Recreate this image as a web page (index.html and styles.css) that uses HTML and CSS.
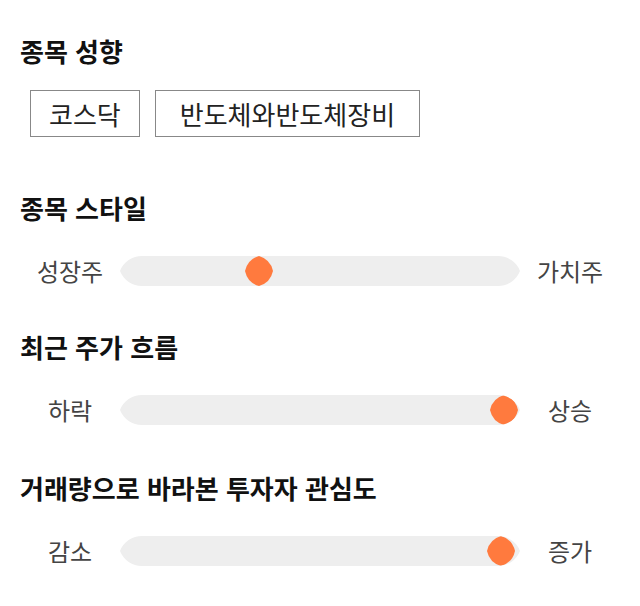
FILE: index.html
```html
<!DOCTYPE html>
<html lang="ko">
<head>
<meta charset="utf-8">
<title>종목 성향</title>
<link rel="stylesheet" href="styles.css">
</head>
<body>
<main class="page">
  <section class="section section-tendency">
    <h2 class="section-title">종목 성향</h2>
    <div class="tags">
      <span class="tag tag-short">코스닥</span>
      <span class="tag tag-long">반도체와반도체장비</span>
    </div>
  </section>

  <section class="section section-slider">
    <h2 class="section-title">종목 스타일</h2>
    <div class="slider-row">
      <span class="slider-label">성장주</span>
      <div class="track">
        <svg class="thumb" style="left: calc((100% - 28px) * 0.336)" viewBox="0 0 28 30" width="28" height="30"><path d="M14 0 A20 20 0 0 1 28 15 A20 20 0 0 1 14 30 A20 20 0 0 1 0 15 A20 20 0 0 1 14 0 Z"/></svg>
      </div>
      <span class="slider-label">가치주</span>
    </div>
  </section>

  <section class="section section-slider">
    <h2 class="section-title">최근 주가 흐름</h2>
    <div class="slider-row">
      <span class="slider-label">하락</span>
      <div class="track">
        <svg class="thumb" style="left: calc((100% - 28px) * 0.995)" viewBox="0 0 28 30" width="28" height="30"><path d="M14 0 A20 20 0 0 1 28 15 A20 20 0 0 1 14 30 A20 20 0 0 1 0 15 A20 20 0 0 1 14 0 Z"/></svg>
      </div>
      <span class="slider-label">상승</span>
    </div>
  </section>

  <section class="section section-slider section-last">
    <h2 class="section-title">거래량으로 바라본 투자자 관심도</h2>
    <div class="slider-row">
      <span class="slider-label">감소</span>
      <div class="track">
        <svg class="thumb" style="left: calc((100% - 28px) * 0.987)" viewBox="0 0 28 30" width="28" height="30"><path d="M14 0 A20 20 0 0 1 28 15 A20 20 0 0 1 14 30 A20 20 0 0 1 0 15 A20 20 0 0 1 14 0 Z"/></svg>
      </div>
      <span class="slider-label">증가</span>
    </div>
  </section>
</main>
</body>
</html>
```

FILE: styles.css
```css
* {
  box-sizing: border-box;
}

html, body {
  margin: 0;
  padding: 0;
  background: #ffffff;
}

body {
  font-family: "Noto Sans CJK KR", "Noto Sans", sans-serif;
  color: #111111;
}

.page {
  display: flex;
  flex-direction: column;
  padding: 35px 20px 0 20px;
}

.section-title {
  margin: 0;
  font-size: 26px;
  font-weight: 700;
  line-height: 32px;
  color: #111111;
}

.section-tendency + .section-slider {
  margin-top: 55px;
}

.section-slider + .section-slider {
  margin-top: 45px;
}

.section-slider + .section-last {
  margin-top: 47px;
}

.tags {
  display: flex;
  gap: 15px;
  margin: 23px 0 0 10px;
}

.tag {
  display: block;
  height: 47px;
  line-height: 45px;
  border: 1px solid #888888;
  font-size: 26px;
  color: #222222;
  white-space: nowrap;
}

.tag-short {
  padding: 0 18px;
}

.tag-long {
  padding: 0 24px;
}

.slider-row {
  display: grid;
  grid-template-columns: 100px 400px 100px;
  align-items: center;
  margin-top: 32px;
  height: 30px;
}

.slider-label {
  text-align: center;
  font-size: 24px;
  line-height: 30px;
  color: #444444;
}

.track {
  position: relative;
  height: 30px;
  background: #eeeeee;
  clip-path: path("M22 0 H378 A23.6 23.6 0 0 1 400 15 A23.6 23.6 0 0 1 378 30 H22 A23.6 23.6 0 0 1 0 15 A23.6 23.6 0 0 1 22 0 Z");
}

.thumb {
  position: absolute;
  top: 0;
  display: block;
  fill: #ff7a3e;
}
```
